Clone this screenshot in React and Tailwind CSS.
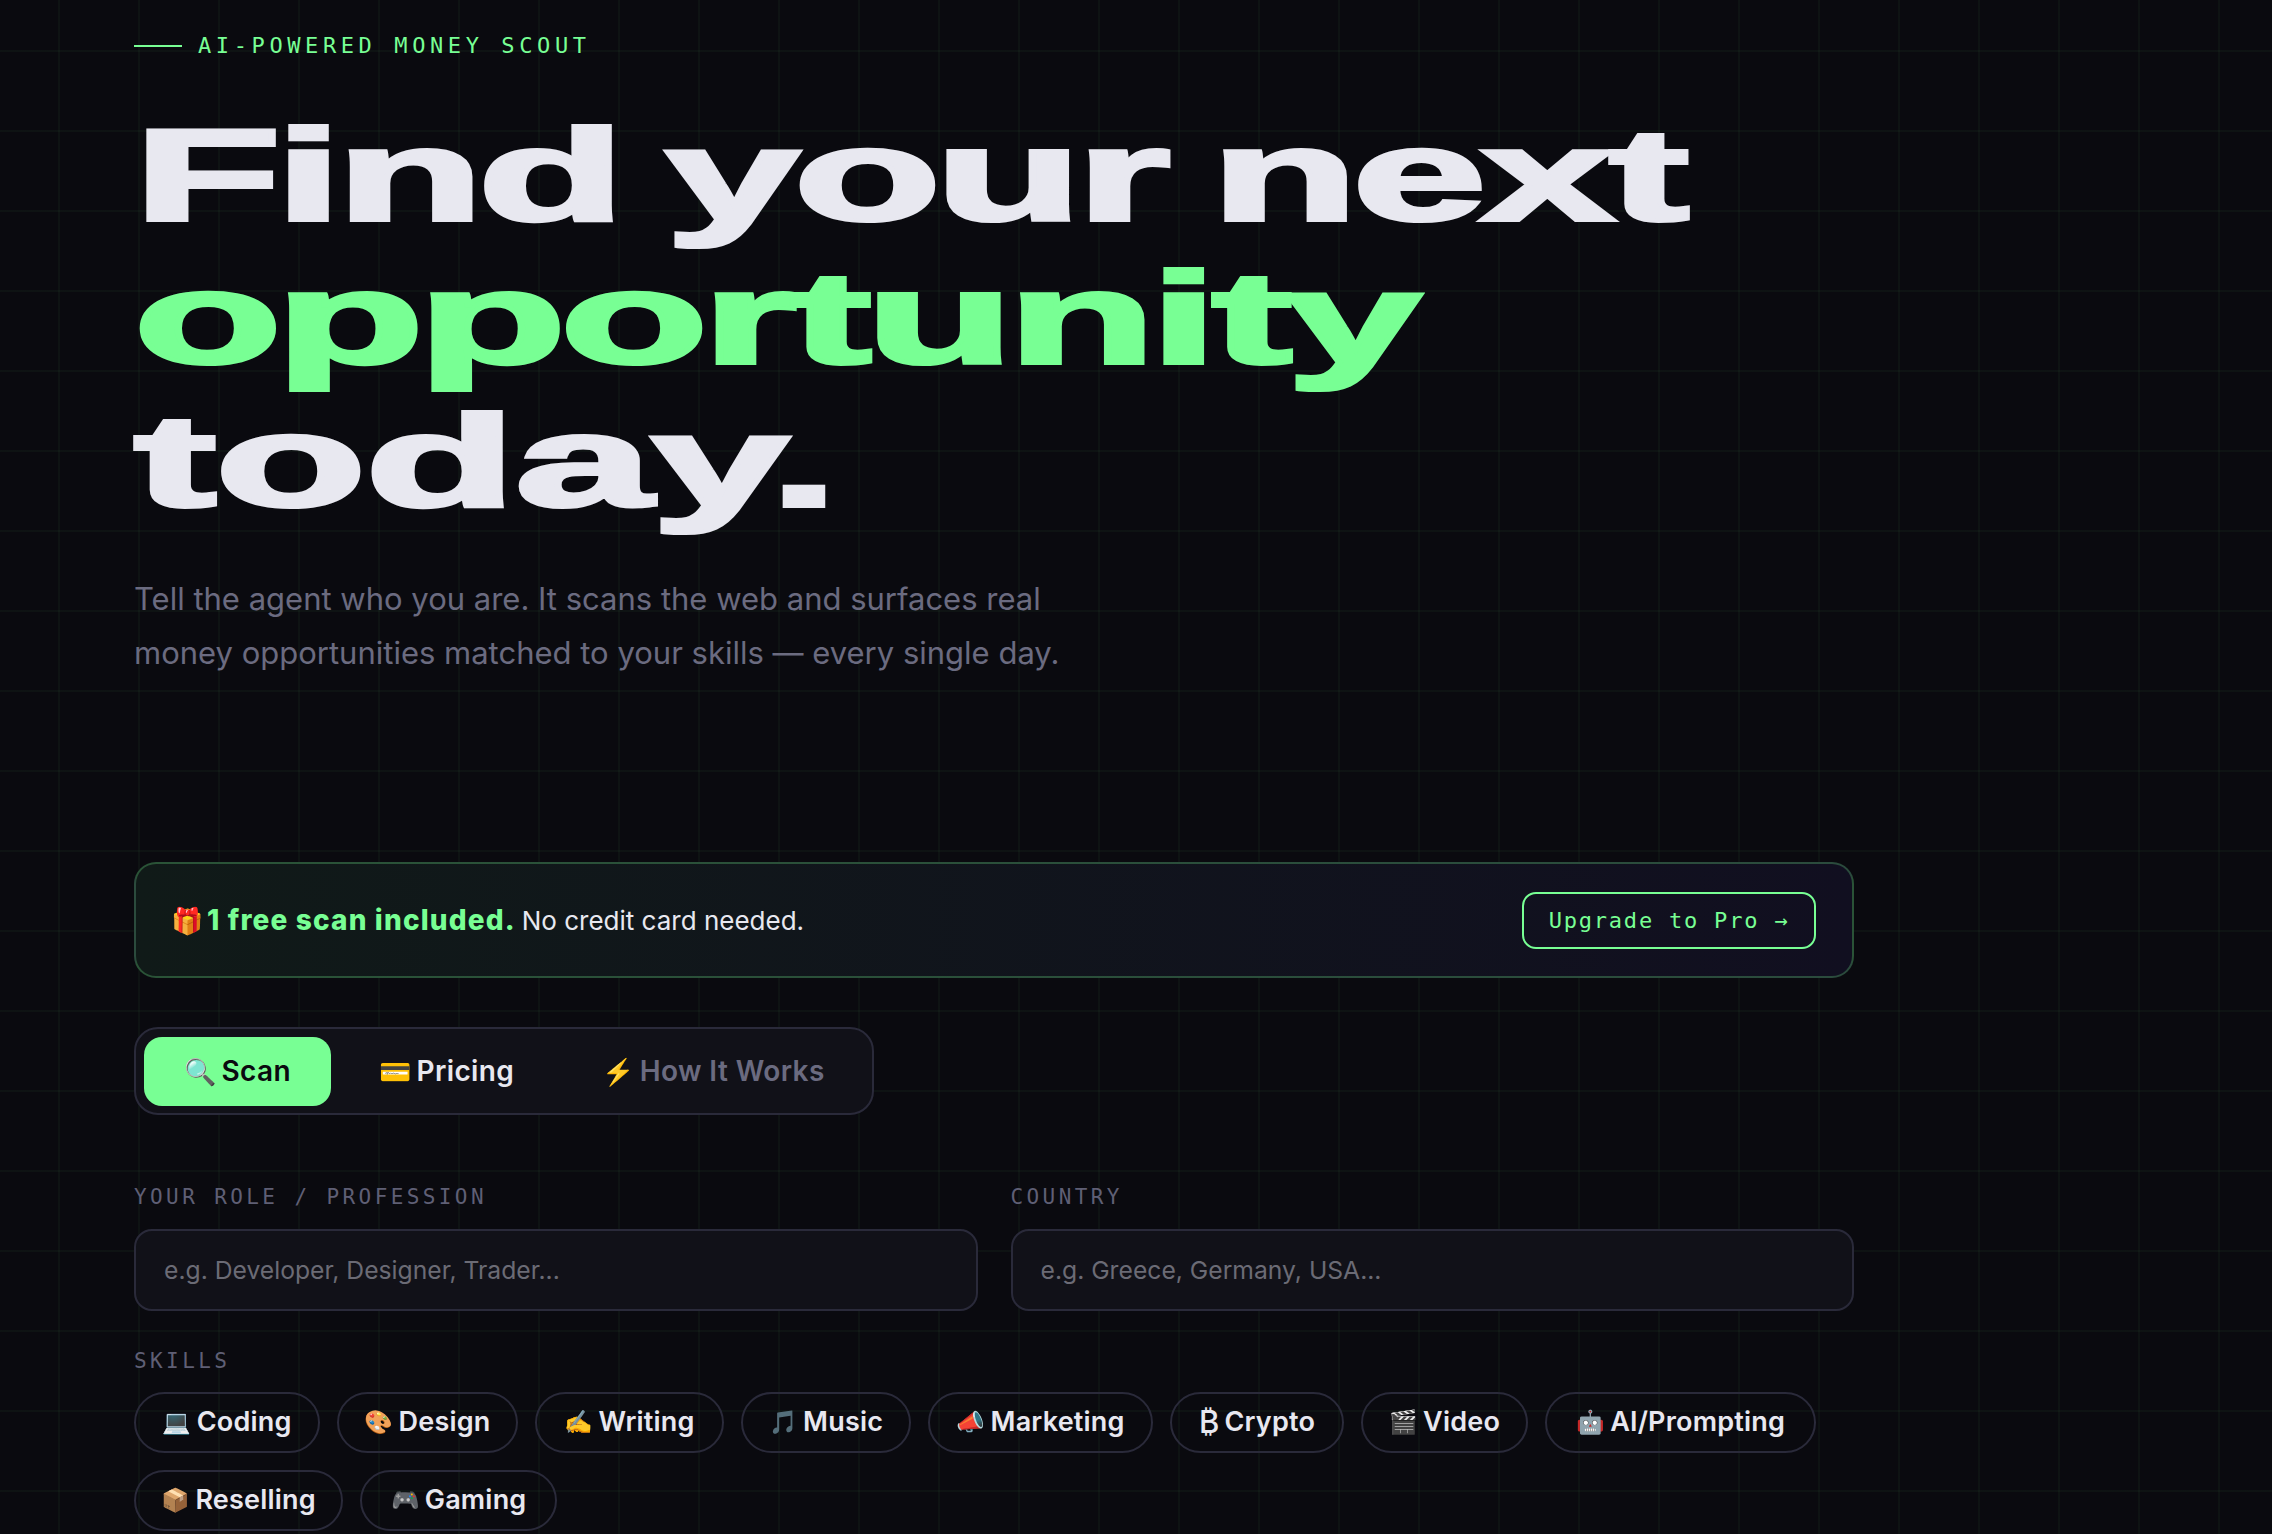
const mono = "font-['DejaVu_Sans_Mono',monospace]";
const sans = "font-['Inter',sans-serif]";

const skillRows = [
  ["💻", "Coding", "w-[186px]", "text-[23px]"],
  ["🎨", "Design", "w-[181px]", "text-[23px]"],
  ["✍️", "Writing", "w-[189px]", "text-[23px]"],
  ["🎵", "Music", "w-[170px]", "text-[23px]"],
  ["📣", "Marketing", "w-[225px]", "text-[23px]"],
  ["₿", "Crypto", "w-[174px]", "text-[31px] font-medium"],
  ["🎬", "Video", "w-[167px]", "text-[23px]"],
  ["🤖", "AI/Prompting", "w-[271px]", "text-[23px]"],
  ["📦", "Reselling", "w-[209px]", "text-[23px]"],
  ["🎮", "Gaming", "w-[197px]", "text-[23px]"],
];

function Chip({ icon, label, width, iconClass }) {
  return (
    <button className={`${width} h-[61px] flex items-center justify-center gap-[5px] rounded-full border-2 border-[#2a2a3a] text-[27px] tracking-[0.2px] font-semibold text-[#e8e8f0] whitespace-nowrap`}>
      <span className={iconClass}>{icon}</span>
      <span>{label}</span>
    </button>
  );
}

function Field({ label, placeholder }) {
  return (
    <div className="flex flex-col gap-[20px]">
      <label className={`${mono} text-[21px] leading-[24px] tracking-[3.4px] text-[#5f5f75]`}>{label}</label>
      <input
        placeholder={placeholder}
        className={`${sans} h-[82px] w-full px-[28px] rounded-[18px] border-2 border-[#2a2a3a] bg-[#111118] text-[24.7px] text-[#e8e8f0] placeholder:text-[#6b6b75]`}
      />
    </div>
  );
}

function Tab({ icon, label, className }) {
  return (
    <button className={`h-[69px] flex items-center justify-center gap-[5px] px-[40px] rounded-[18px] whitespace-nowrap ${className}`}>
      <span className="text-[26px]">{icon}</span>
      <span>{label}</span>
    </button>
  );
}

export default function App() {
  return (
    <div className={`${sans} h-[1534px] overflow-hidden bg-[#0a0a0f] bg-[linear-gradient(rgba(120,255,150,0.035)_2px,transparent_2px),linear-gradient(90deg,rgba(120,255,150,0.035)_2px,transparent_2px)] bg-[size:80px_80px] bg-[position:58px_50px] pl-[134px] w-full`}>
      <div className="w-[1720px] pt-[34px]">
        <div className="flex items-center gap-[16px] h-[24px]">
          <span className="w-[48px] h-[2px] bg-[#78ff94]" />
          <span className={`${mono} text-[22px] leading-[24px] tracking-[4.6px] text-[#78ff94]`}>AI-POWERED MONEY SCOUT</span>
        </div>

        <h1 className="mt-[46px] font-['Liberation_Sans',sans-serif] text-[130px] leading-[143px] font-bold tracking-[-3px] [-webkit-text-stroke:4px_currentColor] text-[#e8e8f0] whitespace-nowrap">
          <div className="origin-left scale-x-[1.85] [word-spacing:-8px]">Find your next</div>
          <div className="origin-left scale-x-[1.86] text-[#78ff94]">opportunity</div>
          <div className="origin-left scale-x-[1.9] tracking-[-0.5px]">today.</div>
        </h1>

        <p className="mt-[39px] text-[31px] leading-[54px] text-[#6b6b80]">
          Tell the agent who you are. It scans the web and surfaces real<br />
          money opportunities matched to your skills — every single day.
        </p>

        <div className="mt-[182px] h-[116px] flex items-center justify-between pl-[35px] pr-[36px] rounded-[22px] border-2 border-[#78ff94]/25 bg-[linear-gradient(90deg,#101a18,#110f20)]">
          <div className="flex items-center gap-[4px] text-[26px] text-[#e8e8f0]">
            <span>🎁</span>
            <span className="text-[28px] tracking-[1.15px] font-extrabold text-[#78ff94]">1 free scan included.</span>
            <span className="ml-[2px]">No credit card needed.</span>
          </div>
          <button className={`${mono} h-[57px] w-[294px] rounded-[14px] border-2 border-[#78ff94] text-[22px] tracking-[1.8px] text-[#78ff94]`}>Upgrade to Pro →</button>
        </div>

        <div className="mt-[49px] w-[740px] h-[88px] flex items-center gap-[8px] p-[8px] rounded-[24px] border-2 border-[#2a2a3a] bg-[#111118] text-[28px] tracking-[0.4px] font-semibold">
          <Tab icon="🔍" label="Scan" className="bg-[#78ff94] text-[#0a0a0f]" />
          <Tab icon="💳" label="Pricing" className="text-[#e8e8f0]" />
          <Tab icon="⚡" label="How It Works" className="text-[#6b6b80]" />
        </div>

        <div className="mt-[70px] grid grid-cols-2 gap-[33px]">
          <Field label="YOUR ROLE / PROFESSION" placeholder="e.g. Developer, Designer, Trader..." />
          <Field label="COUNTRY" placeholder="e.g. Greece, Germany, USA..." />
        </div>

        <div className={`${mono} mt-[38px] text-[21px] leading-[24px] tracking-[3.4px] text-[#5f5f75]`}>SKILLS</div>
        <div className="mt-[19px] flex flex-wrap gap-[17px]">
          {skillRows.map(([i, l, w, c]) => <Chip key={l} icon={i} label={l} width={w} iconClass={c} />)}
        </div>
      </div>
    </div>
  );
}
